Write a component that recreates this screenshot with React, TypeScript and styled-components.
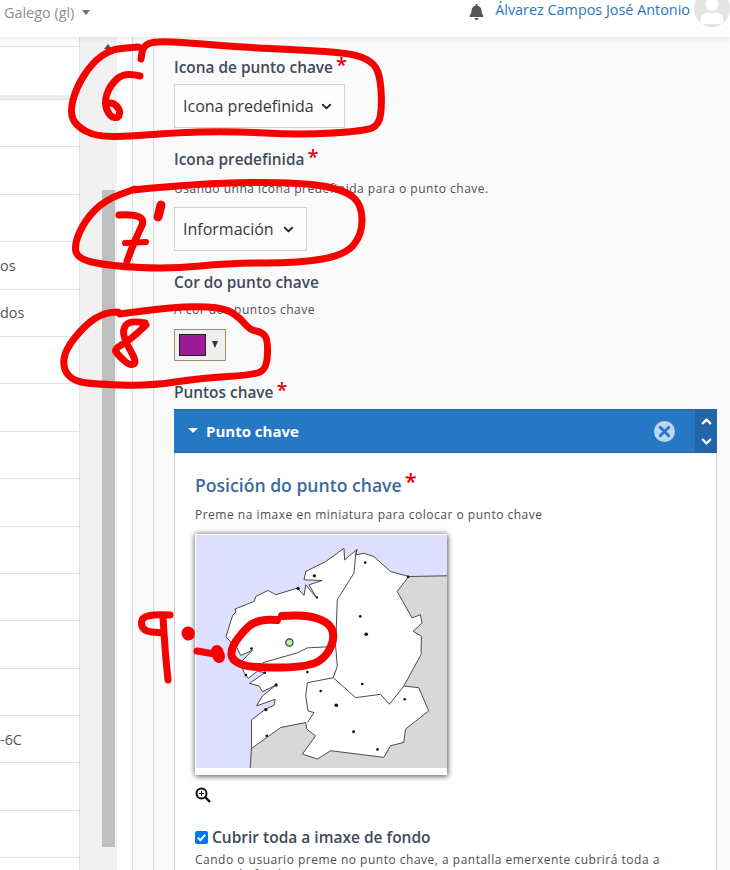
import React from 'react';
import styled, { createGlobalStyle } from 'styled-components';
import { FaBell, FaUser } from 'react-icons/fa';
import { FiChevronUp, FiChevronDown, FiX } from 'react-icons/fi';

const GlobalStyle = createGlobalStyle`
  html, body {
    margin: 0;
    padding: 0;
    background: #fafafa;
  }
  * { box-sizing: border-box; }
  body {
    font-family: "Open Sans", "Liberation Sans", sans-serif;
    color: #373a3c;
  }
`;

const Page = styled.div`
  position: relative;
  width: 730px;
  height: 870px;
  overflow: hidden;
  display: flex;
  flex-direction: column;
`;

const Header = styled.header`
  height: 37px;
  flex: none;
  background: white;
  box-shadow: 0 2px 5px rgba(0, 0, 0, 0.08);
  display: flex;
  align-items: flex-start;
  justify-content: space-between;
  position: relative;
  z-index: 2;
`;

const Language = styled.div`
  padding: 3px 0 0 4px;
  font-size: 14.4px;
  line-height: 20px;
  color: #868e96;
  display: flex;
  align-items: center;
  gap: 8px;
`;

const Caret = styled.span`
  width: 0;
  height: 0;
  border-left: 4.5px solid transparent;
  border-right: 4.5px solid transparent;
  border-top: 5px solid #6c757d;
  margin-top: -2px;
`;

const UserMenu = styled.div`
  display: flex;
  align-items: flex-start;
  height: 30px;
`;

const BellIcon = styled(FaBell)`
  width: 15px;
  height: 16px;
  color: #555;
  margin: 4px 11px 0 0;
`;

const UserName = styled.a`
  font-size: 14.4px;
  line-height: 20px;
  color: #2677c4;
  margin-right: 4px;
`;

const Avatar = styled.div`
  width: 36px;
  height: 36px;
  border-radius: 50%;
  background: #e4e4e4;
  margin-top: -9px;
  overflow: hidden;
  display: flex;
  justify-content: center;
  align-items: flex-end;
`;

const AvatarIcon = styled(FaUser)`
  width: 26px;
  height: 26px;
  color: white;
  margin-bottom: 3px;
`;

const Main = styled.main`
  flex: 1;
  display: flex;
  min-height: 0;
`;

const Sidebar = styled.aside`
  width: 80px;
  flex: none;
  background: white;
  border-right: 1px solid #dee2e6;
  padding-top: 9px;
`;

const SideRow = styled.div<{ $tall?: boolean }>`
  height: ${p => (p.$tall ? '53px' : '47.4px')};
  border-top: 1px solid #e2e2e2;
  border-bottom: ${p => (p.$tall ? '4px solid #eeeeee' : '0')};
  font-size: 14.4px;
  color: #555;
  display: flex;
  align-items: center;
  overflow: hidden;
`;

const ScrollGutter = styled.div`
  width: 37px;
  flex: none;
  background: #f1f1f1;
  padding-left: 22px;
  position: relative;
`;

const ScrollArrow = styled.span`
  position: absolute;
  left: 24px;
  top: 7px;
  width: 0;
  height: 0;
  border-left: 4px solid transparent;
  border-right: 4px solid transparent;
  border-bottom: 5px solid #505050;
`;

const ScrollThumb = styled.div`
  width: 13px;
  height: 657px;
  margin-top: 153px;
  background: #bfbfbf;
`;

const WhiteColumn = styled.div`
  width: 16px;
  flex: none;
  background: white;
  border-right: 1px solid #d9d9d9;
`;

const IndentColumn = styled.div`
  width: 21px;
  flex: none;
  background: #fafafa;
  border-right: 1px solid #d9d9d9;
`;

const Content = styled.section`
  flex: 1;
  padding: 20px 13px 0 20px;
  min-width: 0;
`;

const FieldLabel = styled.div`
  font-size: 15.4px;
  font-weight: 600;
  line-height: 22px;
  color: #404a5a;
  display: flex;
  gap: 3px;
`;

const Required = styled.span<{ $size?: number }>`
  color: #e3000f;
  font-size: ${p => p.$size ?? 20}px;
  line-height: 16px;
  font-weight: 600;
`;

const Hint = styled.div<{ $mt?: number }>`
  margin-top: ${p => p.$mt ?? 0}px;
  font-size: 12px;
  line-height: 16px;
  letter-spacing: 0.5px;
  color: #4a4f57;
`;

const HelpText = styled(Hint)`
  margin-top: 4px;
  line-height: 15px;
`;

const SelectBox = styled.div<{ $width: number; $mt: number; $mb: number }>`
  width: ${p => p.$width}px;
  height: 44px;
  margin: ${p => p.$mt}px 0 ${p => p.$mb}px;
  border: 1px solid #ced4da;
  background: #fdfdfd;
  padding: 0 8px;
  display: flex;
  align-items: center;
  justify-content: space-between;
  font-size: 16px;
  color: #343a40;
`;

const SelectChevron = styled(FiChevronDown)`
  width: 15px;
  height: 15px;
  stroke-width: 3;
  color: #222;
  flex: none;
  margin-right: 2px;
`;

const ColorButton = styled.div`
  width: 52px;
  height: 32px;
  margin: 11px 0 21px;
  background: #efefef;
  border: 1px solid #a28a70;
  padding: 4px;
  display: flex;
  align-items: center;
  gap: 6px;
`;

const ColorSwatch = styled.span`
  width: 27px;
  height: 22px;
  background: #9c1c96;
  border: 1px solid #222;
`;

const ColorArrow = styled.span`
  width: 0;
  height: 0;
  border-left: 3.5px solid transparent;
  border-right: 3.5px solid transparent;
  border-top: 7px solid #333;
  margin-top: -2px;
`;

const PanelHead = styled.div`
  margin-top: 5px;
  height: 44px;
  background: #2677c4;
  border-top: 1px solid #1f66a9;
  border-bottom: 1px solid #1f66a9;
  display: flex;
  align-items: center;
  color: white;
  padding-left: 14px;
  font-size: 15px;
  font-weight: 700;
`;

const HeadCaret = styled.span`
  width: 0;
  height: 0;
  border-left: 5px solid transparent;
  border-right: 5px solid transparent;
  border-top: 5px solid white;
  margin-right: 8px;
  margin-top: -2px;
`;

const HeadTitle = styled.span`
  flex: 1;
`;

const RemoveButton = styled.span`
  width: 21px;
  height: 21px;
  border-radius: 50%;
  background: #bcd6ee;
  color: #2677c4;
  display: flex;
  align-items: center;
  justify-content: center;
  margin-right: 20px;
`;

const RemoveIcon = styled(FiX)`
  width: 17px;
  height: 17px;
  stroke-width: 4;
`;

const MoveButtons = styled.div`
  width: 22px;
  align-self: stretch;
  margin: -1px 0;
  background: #2265a8;
  display: flex;
  flex-direction: column;
  align-items: center;
  justify-content: center;
  gap: 5px;
`;

const MoveUp = styled(FiChevronUp)`
  width: 15px;
  height: 15px;
  stroke-width: 3.5;
  color: white;
`;

const MoveDown = styled(FiChevronDown)`
  width: 15px;
  height: 15px;
  stroke-width: 3.5;
  color: white;
`;

const PanelBody = styled.div`
  background: white;
  border-left: 1px solid #cfcfcf;
  border-right: 1px solid #cfcfcf;
  padding: 19px 20px 0;
  height: 470px;
`;

const PanelTitle = styled.h3`
  margin: 0 0 9px;
  font-size: 17.6px;
  line-height: 26px;
  font-weight: 600;
  color: #3a6a9e;
  display: flex;
  gap: 3px;
`;

const MapFrame = styled.div`
  width: 252px;
  height: 241px;
  margin-top: 11px;
  background: white;
  padding: 1px 1px 7px;
  box-shadow: 0 0 6px rgba(0, 0, 0, 0.55), 1px 2px 5px rgba(0, 0, 0, 0.3);
`;

const MapSvg = styled.svg`
  display: block;
  width: 251px;
  height: 233px;
`;

const ZoomIcon = styled.svg`
  display: block;
  width: 16px;
  height: 16px;
  margin: 12px 0 23px;
`;

const CheckRow = styled.label`
  display: flex;
  align-items: center;
  gap: 4px;
  font-size: 15.5px;
  font-weight: 600;
  line-height: 22px;
  color: #404a5a;
`;

const Checkbox = styled.span`
  width: 13px;
  height: 13px;
  border-radius: 2px;
  background: #0075ff;
  display: flex;
  align-items: center;
  justify-content: center;
`;

const ScribbleLayer = styled.svg`
  position: absolute;
  left: 0;
  top: 0;
  width: 730px;
  height: 870px;
  z-index: 3;
  pointer-events: none;
`;

type Pt = [number, number];

// curva suave a traves dos puntos medios
const smooth = (pts: Pt[]) => {
  let d = `M${pts[0][0]} ${pts[0][1]}`;
  for (let i = 1; i < pts.length - 1; i++) {
    const mx = (pts[i][0] + pts[i + 1][0]) / 2;
    const my = (pts[i][1] + pts[i + 1][1]) / 2;
    d += ` Q${pts[i][0]} ${pts[i][1]} ${mx} ${my}`;
  }
  const last = pts[pts.length - 1];
  return `${d} L${last[0]} ${last[1]}`;
};

const scribbles: { pts: Pt[]; w: number }[] = [
  { w: 7, pts: [[138, 47], [125, 48], [110, 50], [92, 63], [76, 88], [70, 112], [76, 126], [97, 137], [135, 136], [170, 133], [230, 131], [300, 135], [365, 131], [379, 125], [382, 105], [380, 75], [372, 61], [350, 53], [300, 50], [240, 47], [190, 43], [155, 41], [143, 46], [141, 59]] },
  { w: 7, pts: [[140, 76], [125, 72], [110, 85], [104, 103], [110, 117], [119, 118], [120, 109], [112, 102], [106, 105]] },
  { w: 7, pts: [[133, 190], [200, 183], [300, 182], [345, 190], [362, 205], [362, 235], [345, 255], [300, 263], [230, 263], [170, 269], [110, 266], [78, 259], [74, 245], [85, 220], [105, 200], [135, 189]] },
  { w: 7, pts: [[119, 215], [148, 213], [135, 240], [127, 261]] },
  { w: 6, pts: [[125, 243], [146, 242]] },
  { w: 9, pts: [[161, 205], [158, 217]] },
  { w: 7, pts: [[118, 312], [105, 312], [85, 325], [65, 350], [63, 368], [72, 380], [90, 384], [150, 386], [200, 378], [255, 375], [267, 368], [268, 340], [262, 332], [250, 330], [240, 318], [225, 308], [190, 306], [150, 310], [120, 314]] },
  { w: 7, pts: [[145, 323], [130, 320], [122, 330], [127, 345], [137, 362], [130, 366], [118, 355], [114, 349], [130, 340], [146, 325]] },
  { w: 7, pts: [[170, 615], [142, 613], [141, 631], [163, 633]] },
  { w: 7, pts: [[163, 617], [165, 650], [168, 680]] },
  { w: 13, pts: [[188, 633], [188.5, 634]] },
  { w: 7, pts: [[197, 651], [221, 655]] },
  { w: 12, pts: [[217, 651], [219, 657]] },
  { w: 8, pts: [[277, 620], [257, 618], [238, 637], [230, 652], [234, 662], [253, 668], [310, 667], [328, 655], [335, 635], [328, 622], [307, 615], [282, 616]] },
];

const coastline =
  '182,658 182,572 224,540 250,528 253,510 197,530 215,500 256,467 215,487 205,470 176,462 222,430 200,425 172,447 160,430 148,400 185,362 150,378 138,355 105,322 125,258 135,247 132,238 190,215 195,200 232,182 255,195 320,175 340,197 345,165 378,205 355,165 395,152 340,150 345,125 405,95 460,55 462,90 500,58 495,75 520,70 550,80 600,125 655,140 620,185 665,265 690,255 695,280 668,305 693,320 692,375 640,470 685,475 715,545 645,600 640,640 600,650 580,685 420,665 380,690 335,675 375,620 348,600 345,580 270,595 182,658';

const mapDots: [number, number, number][] = [
  [524, 98, 4], [371, 138, 5], [322, 176, 5], [379, 203, 3.5], [653, 141, 4], [509, 260, 4], [527, 314, 5.5],
  [182, 357, 4], [222, 430, 4], [350, 428, 4], [165, 437, 4], [256, 467, 5], [390, 485, 4], [515, 464, 4],
  [437, 528, 5.5], [643, 510, 4], [225, 541, 5], [489, 608, 4.5], [228, 620, 4], [561, 661, 4],
];

const sideRows = ['', '', '', 'os', 'dos', '', '', '', '', '', '', '', '', '-6C', '', '', ''];

const App: React.FC = () => {
  return (
    <Page>
      <GlobalStyle />
      <Header>
        <Language>
          Galego (gl)
          <Caret />
        </Language>
        <UserMenu>
          <BellIcon />
          <UserName>Álvarez Campos José Antonio</UserName>
          <Avatar>
            <AvatarIcon />
          </Avatar>
        </UserMenu>
      </Header>
      <Main>
        <Sidebar>
          <SideRow $tall />
          {sideRows.map((text, i) => (
            <SideRow key={i}>{text}</SideRow>
          ))}
        </Sidebar>
        <ScrollGutter>
          <ScrollArrow />
          <ScrollThumb />
        </ScrollGutter>
        <WhiteColumn />
        <IndentColumn />
        <Content>
          <FieldLabel>
            Icona de punto chave <Required>*</Required>
          </FieldLabel>
          <SelectBox $width={171} $mt={5} $mb={21}>
            Icona predefinida
            <SelectChevron />
          </SelectBox>
          <FieldLabel>
            Icona predefinida <Required>*</Required>
          </FieldLabel>
          <Hint $mt={10}>Usando unha icona predefinida para o punto chave.</Hint>
          <SelectBox $width={133} $mt={10} $mb={21}>
            Información
            <SelectChevron />
          </SelectBox>
          <FieldLabel>Cor do punto chave</FieldLabel>
          <Hint $mt={8}>A cor dos puntos chave</Hint>
          <ColorButton>
            <ColorSwatch />
            <ColorArrow />
          </ColorButton>
          <FieldLabel>
            Puntos chave <Required>*</Required>
          </FieldLabel>
          <PanelHead>
            <HeadCaret />
            <HeadTitle>Punto chave</HeadTitle>
            <RemoveButton>
              <RemoveIcon />
            </RemoveButton>
            <MoveButtons>
              <MoveUp />
              <MoveDown />
            </MoveButtons>
          </PanelHead>
          <PanelBody>
            <PanelTitle>
              Posición do punto chave <Required $size={22}>*</Required>
            </PanelTitle>
            <Hint>Preme na imaxe en miniatura para colocar o punto chave</Hint>
            <MapFrame>
              <MapSvg viewBox="15 15 755 702" preserveAspectRatio="none">
                <rect x="15" y="15" width="755" height="702" fill="#dedeff" />
                <polygon
                  points="770,138 655,140 620,185 665,265 690,255 695,280 668,305 693,320 692,375 640,470 685,475 715,545 645,600 640,640 600,650 580,685 420,665 380,690 335,675 375,620 348,600 345,580 270,595 182,658 178,717 770,717"
                  fill="#d8d8d8"
                />
                <polygon points={coastline} fill="white" stroke="#4a4a4a" strokeWidth="3" strokeLinejoin="round" />
                <polyline points="655,140 770,138" fill="none" stroke="#4a4a4a" strokeWidth="3" />
                <polyline points="182,658 178,717" fill="none" stroke="#4a4a4a" strokeWidth="3" />
                <polyline
                  points="497,60 490,130 440,210 435,350 440,410 428,445 350,460 345,500 352,545 370,550 350,580"
                  fill="none"
                  stroke="#4a4a4a"
                  strokeWidth="3"
                />
                <polyline points="215,400 320,370 350,355 410,352 435,350" fill="none" stroke="#4a4a4a" strokeWidth="3" />
                <polyline points="428,445 495,505 570,495 597,525 640,470" fill="none" stroke="#4a4a4a" strokeWidth="3" />
                {mapDots.map(([cx, cy, r], i) => (
                  <circle key={i} cx={cx} cy={cy} r={r} fill="#111" />
                ))}
                <circle cx="296" cy="339" r="11" fill="#b8f0a4" stroke="#333" strokeWidth="3.5" />
              </MapSvg>
            </MapFrame>
            <ZoomIcon viewBox="0 0 16 16">
              <circle cx="6.5" cy="6.5" r="5" fill="none" stroke="#111" strokeWidth="2" />
              <path d="M10.2 10.2 L15 15" stroke="#111" strokeWidth="2.4" />
              <path d="M4 6.5 H9 M6.5 4 V9" stroke="#111" strokeWidth="1" />
            </ZoomIcon>
            <CheckRow>
              <Checkbox>
                <svg width="11" height="11" viewBox="0 0 11 11">
                  <path d="M1.8 5.6 L4.4 8.2 L9.2 2.6" fill="none" stroke="white" strokeWidth="2" />
                </svg>
              </Checkbox>
              Cubrir toda a imaxe de fondo
            </CheckRow>
            <HelpText>
              Cando o usuario preme no punto chave, a pantalla emerxente cubrirá toda a
              <br />
              imaxe de fondo.
            </HelpText>
          </PanelBody>
        </Content>
      </Main>
      <ScribbleLayer viewBox="0 0 730 870">
        {scribbles.map((s, i) => (
          <path
            key={i}
            d={smooth(s.pts)}
            fill="none"
            stroke="#f60000"
            strokeWidth={s.w}
            strokeLinecap="round"
            strokeLinejoin="round"
          />
        ))}
      </ScribbleLayer>
    </Page>
  );
};

export default App;
